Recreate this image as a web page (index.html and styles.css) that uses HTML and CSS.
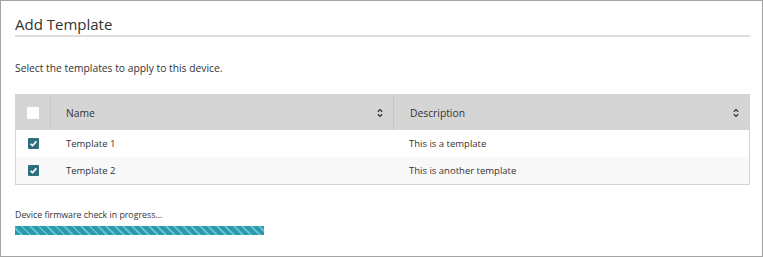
FILE: index.html
```html
<!DOCTYPE html>
<html>
<head>
<meta charset="utf-8">
<link rel="stylesheet" href="styles.css">
</head>
<body>
<div class="dialog">
  <h1 class="title">Add Template</h1>
  <p class="intro">Select the templates to apply to this device.</p>
  <div class="table">
    <div class="row head">
      <div class="cell check"><span class="box"></span></div>
      <div class="cell name">Name<svg class="sort" viewBox="0 0 6 10" width="6" height="10"><path d="M0.8 3.8 L3 1.6 L5.2 3.8 M0.8 6.2 L3 8.4 L5.2 6.2" fill="none" stroke="#333" stroke-width="1.3"/></svg></div>
      <div class="cell desc">Description<svg class="sort" viewBox="0 0 6 10" width="6" height="10"><path d="M0.8 3.8 L3 1.6 L5.2 3.8 M0.8 6.2 L3 8.4 L5.2 6.2" fill="none" stroke="#333" stroke-width="1.3"/></svg></div>
    </div>
    <div class="row">
      <div class="cell check"><span class="box on"><svg viewBox="0 0 11 11" width="11" height="11"><path d="M2.6 5.8 L4.6 7.6 L8.4 3.4" fill="none" stroke="#fff" stroke-width="1.6"/></svg></span></div>
      <div class="cell name">Template 1</div>
      <div class="cell desc">This is a template</div>
    </div>
    <div class="row alt">
      <div class="cell check"><span class="box on"><svg viewBox="0 0 11 11" width="11" height="11"><path d="M2.6 5.8 L4.6 7.6 L8.4 3.4" fill="none" stroke="#fff" stroke-width="1.6"/></svg></span></div>
      <div class="cell name">Template 2</div>
      <div class="cell desc">This is another template</div>
    </div>
  </div>
  <p class="status">Device firmware check in progress...</p>
  <div class="progress"></div>
</div>
</body>
</html>
```
FILE: styles.css
```css
html, body {
  margin: 0;
  padding: 0;
  background: #fff;
}
.dialog {
  box-sizing: border-box;
  width: 763px;
  height: 257px;
  border: 1px solid #a3a3a3;
  padding: 13px 12px 0 14px;
  font-family: "Open Sans", "Noto Sans", sans-serif;
  color: #333;
}
.title {
  margin: 0;
  font-size: 15px;
  font-weight: 400;
  line-height: 20px;
  padding-bottom: 1px;
  border-bottom: 2px solid #dedede;
}
.intro {
  margin: 23px 0 0;
  font-size: 10.3px;
  line-height: 16px;
}
.table {
  margin-top: 18px;
  border: 1px solid #d4d4d4;
}
.row {
  display: grid;
  grid-template-columns: 34px 343px 1fr;
  height: 27px;
  align-items: center;
  font-size: 9.5px;
  background: #fff;
}
.row.alt {
  background: #f8f8f8;
}
.row.head {
  height: 35px;
  background: #d5d5d5;
  font-size: 10.3px;
}
.cell {
  height: 100%;
  display: flex;
  align-items: center;
  box-sizing: border-box;
}
.cell.check {
  justify-content: center;
}
.cell.name, .cell.desc {
  padding-left: 16px;
  padding-right: 10px;
}
.head .cell.name, .head .cell.desc {
  justify-content: space-between;
  border-left: 1px solid #c6c6c6;
  padding-left: 15px;
}
.head .cell.desc {
  padding-left: 16px;
}
.box {
  width: 11px;
  height: 11px;
  background: #fff;
  border-radius: 1px;
  display: block;
}
.head .box {
  width: 12px;
  height: 12px;
}
.box.on {
  background: #2f6e7d;
}
.box svg {
  display: block;
}
.sort {
  display: block;
}
.status {
  margin: 24px 0 0;
  font-size: 8.8px;
  line-height: 13px;
}
.progress {
  margin-top: 4px;
  width: 249px;
  height: 9px;
  background: repeating-linear-gradient(45deg, #2a9bae 0 4px, #63bfcd 4px 6px);
}
```
